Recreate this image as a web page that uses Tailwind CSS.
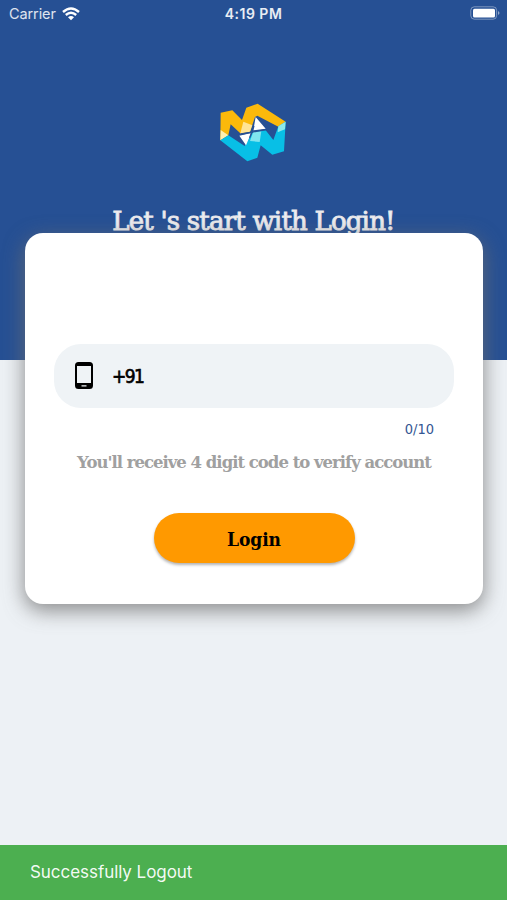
<!DOCTYPE html>
<html lang="en">
<head>
<meta charset="utf-8">
<meta name="viewport" content="width=device-width, initial-scale=1">
<title>Login</title>
<script src="https://cdn.jsdelivr.net/npm/@tailwindcss/browser@4"></script>
</head>
<body class="bg-[#edf1f5] font-['Inter','Liberation_Sans',sans-serif]">
<div class="w-[507px] h-[900px] flex flex-col overflow-hidden">
  <header class="h-[360px] shrink-0 bg-[#265094] flex flex-col items-center text-white">
    <div class="h-[28px] w-full grid grid-cols-3 items-center pl-[9px] pr-[7px]">
      <div class="flex items-center gap-[6px] text-[14.5px] text-white/85"><span class="tracking-[-0.1px]">Carrier</span>
        <svg class="w-[18px] h-[14px] -mt-[1px]" viewBox="0 0 18 14" fill="none" stroke="#fff" stroke-width="2.4"><path d="M1 5Q9-2 17 5M3.8 8Q9 3.5 14.2 8"/><path d="M6 10.2Q9 7.8 12 10.2L9 13.3Z" fill="#fff" stroke="none"/></svg>
      </div>
      <div class="-mt-[1px] -ml-[2px] text-center text-[14px] tracking-[0.5px] font-semibold text-white/90 whitespace-nowrap">4:19 PM</div>
      <svg class="justify-self-end w-[30px] h-[14px] -mt-[2px]" viewBox="0 0 30 14"><rect x=".8" y=".8" width="25.8" height="12.4" rx="3.5" fill="none" stroke="#fff" stroke-opacity=".4"/><rect x="3" y="2.8" width="22" height="8.6" rx="1.5" fill="#fff"/><path d="M28 5q3 2 0 4z" fill="#fff" opacity=".5"/></svg>
    </div>
    <svg class="w-[90px] h-[75px] mt-[67px] ml-[1px]" viewBox="0 0 270 225">
      <path d="M35 53L70 46 99 75 112 38 146 26 230 80 208 95 145 62 138 66 123 110 94 115 65 88 58 121 34 136Z" fill="#fbb90b"/>
      <path d="M34 136L35 105 58 121Z" fill="#fff0b2"/>
      <path d="M94 115L103 80 130 91 123 110Z" fill="#ffe495"/>
      <path d="M34 136L58 121 107 153 133 110 170 106 193 135 208 94 230 80 225 169 190 179 155 151 145 188 115 199Z" fill="#08bfe6"/>
      <path d="M133 110L157 109 152 141 123 138Z" fill="#80e4ef"/>
      <path d="M208 94L230 80 228 103 206 112Z" fill="#8de8eb"/>
      <path d="M140 66L170 101 133 106ZM91 122L127 114 111 151Z" fill="#fff"/>
      <path d="M98 117L171 104M135 93L122 128" stroke="#265094" stroke-width="4"/>
    </svg>
    <h1 class="mt-[33px] text-[26px] leading-[36px] whitespace-nowrap font-['Roboto_Slab','DejaVu_Serif',serif] tracking-[-0.8px] [-webkit-text-stroke:0.9px_#e8e8ec] text-[#f0f0f2]">Let 's start with Login!</h1>
  </header>
  <main class="relative -mt-[127px] ml-[25px] w-[458px] h-[371px] shrink-0 rounded-[18px] bg-white shadow-[0_6px_20px_1px_rgba(110,110,110,0.75)] px-[29px] pt-[111px] flex flex-col items-center font-['Roboto_Slab','DejaVu_Serif',serif]">
    <div class="w-full h-[64px] shrink-0 rounded-[27px] bg-[#eff3f6] flex items-center pl-[21px]">
      <svg class="w-[18px] h-[28px]" viewBox="0 0 18 28"><path fill="#000" fill-rule="evenodd" d="M3.5 0h11A3.5 3.5 0 0 1 18 3.5v20a3.5 3.5 0 0 1-3.5 3.5h-11A3.5 3.5 0 0 1 0 23.5v-20A3.5 3.5 0 0 1 3.5 0ZM2 4v17h14V4ZM6.5 23.2v1.2h5v-1.2Z"/></svg>
      <span class="ml-[19px] text-[19px] text-black font-['Roboto_Slab','DejaVu_Sans',sans-serif] [font-stretch:condensed] tracking-[-1.6px] [-webkit-text-stroke:0.6px_black]">+91</span>
    </div>
    <div class="mt-[11px] mr-[20px] self-end text-[14.5px] leading-[20px] text-[#345793] font-['Roboto_Slab','DejaVu_Sans',sans-serif] [font-stretch:condensed]">0/10</div>
    <p class="mt-[12px] text-[16.5px] leading-[24px] font-bold whitespace-nowrap text-[#a0a0a0] tracking-[-1px]">You'll receive 4 digit code to verify account</p>
    <button class="mt-[38px] w-[201px] h-[50px] shrink-0 rounded-full bg-[#ff9900] text-black font-bold text-[19px] [font-stretch:condensed] tracking-[-0.1px] pt-[2px] shadow-[0_2px_3px_rgba(0,0,0,0.3)]">Login</button>
  </main>
  <footer class="mt-auto h-[55px] shrink-0 bg-[#4caf50] text-white/95 flex items-center pl-[30px] text-[17px] tracking-[-0.05px]">Successfully Logout</footer>
</div>
</body>
</html>
